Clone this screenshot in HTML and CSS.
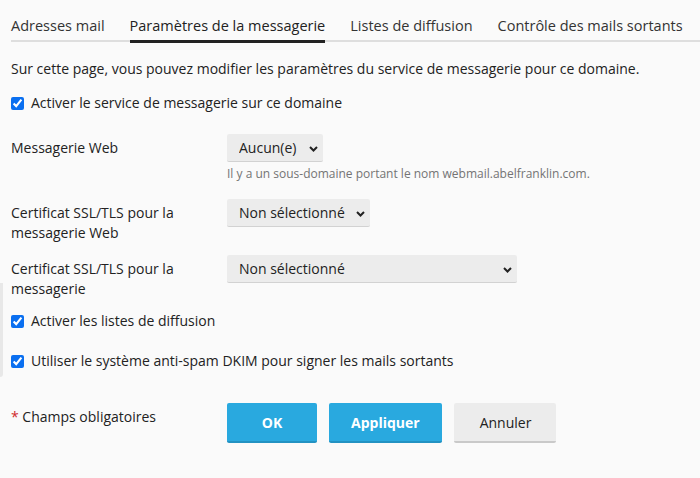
FILE: index.html
```html
<!DOCTYPE html>
<html lang="fr">
<head>
<meta charset="utf-8">
<title>Paramètres de la messagerie</title>
<link rel="stylesheet" href="styles.css">
</head>
<body>
<div class="side-mark"></div>
<div class="page">
  <nav class="tabs">
    <a class="tab">Adresses mail</a>
    <a class="tab active">Paramètres de la messagerie</a>
    <a class="tab">Listes de diffusion</a>
    <a class="tab">Contrôle des mails sortants</a>
  </nav>

  <p class="intro">Sur cette page, vous pouvez modifier les paramètres du service de messagerie pour ce domaine.</p>

  <label class="check first-check"><input type="checkbox" checked><span>Activer le service de messagerie sur ce domaine</span></label>

  <div class="row row-web">
    <div class="label">Messagerie Web</div>
    <div class="field">
      <span class="select-wrap w-small">
        <select class="select"><option>Aucun(e)</option></select>
        <svg class="chev" width="9" height="6" viewBox="0 0 9 6"><path d="M1 1 L4.5 4.5 L8 1" fill="none" stroke="#222" stroke-width="2"/></svg>
      </span>
      <div class="hint">Il y a un sous-domaine portant le nom webmail.abelfranklin.com.</div>
    </div>
  </div>

  <div class="row row-cert">
    <div class="label">Certificat SSL/TLS pour la messagerie Web</div>
    <div class="field">
      <span class="select-wrap w-mid">
        <select class="select"><option>Non sélectionné</option></select>
        <svg class="chev" width="9" height="6" viewBox="0 0 9 6"><path d="M1 1 L4.5 4.5 L8 1" fill="none" stroke="#222" stroke-width="2"/></svg>
      </span>
    </div>
  </div>

  <div class="row row-cert2">
    <div class="label">Certificat SSL/TLS pour la messagerie</div>
    <div class="field">
      <span class="select-wrap w-wide">
        <select class="select"><option>Non sélectionné</option></select>
        <svg class="chev" width="9" height="6" viewBox="0 0 9 6"><path d="M1 1 L4.5 4.5 L8 1" fill="none" stroke="#222" stroke-width="2"/></svg>
      </span>
    </div>
  </div>

  <label class="check lists-check"><input type="checkbox" checked><span>Activer les listes de diffusion</span></label>
  <label class="check dkim-check"><input type="checkbox" checked><span>Utiliser le système anti-spam DKIM pour signer les mails sortants</span></label>

  <div class="row footer">
    <div class="label req"><span class="star">*</span> Champs obligatoires</div>
    <div class="buttons">
      <button class="btn primary btn-ok">OK</button>
      <button class="btn primary">Appliquer</button>
      <button class="btn secondary">Annuler</button>
    </div>
  </div>
</div>
</body>
</html>
```

FILE: styles.css
```css
html, body {
  margin: 0;
  padding: 0;
  background: #fafafa;
}
body {
  font-family: "Open Sans", "Noto Sans", sans-serif;
  font-size: 14px;
  line-height: 20px;
  color: #222;
  position: relative;
  height: 478px;
  overflow: hidden;
}
.side-mark {
  position: absolute;
  left: 0;
  top: 283px;
  width: 3px;
  height: 94px;
  background: #e8e8e8;
  border-bottom-right-radius: 3px;
}
.page {
  padding-left: 11px;
}
.tabs {
  display: flex;
  gap: 25px;
  padding-top: 16px;
  border-bottom: 2px solid #dedede;
}
.tab {
  position: relative;
  color: #333;
  font-size: 14.5px;
  padding-bottom: 4px;
  white-space: nowrap;
}
.tab.active {
  color: #222;
}
.tab.active::after {
  content: "";
  position: absolute;
  left: 0;
  right: 0;
  bottom: -3px;
  height: 3px;
  background: #222;
}
.intro {
  margin: 17px 0 0;
  color: #222;
}
.check {
  display: flex;
  align-items: center;
}
.check input {
  width: 13px;
  height: 13px;
  margin: 0 7px 0 0;
  accent-color: #0a6ff0;
}
.first-check { margin-top: 14px; }
.lists-check { margin-top: 12px; }
.dkim-check { margin-top: 20px; }

.row {
  display: grid;
  grid-template-columns: 216px 1fr;
  align-items: start;
}
.label {
  padding-top: 4px;
  padding-right: 30px;
}
.row-web { margin-top: 21px; }
.row-cert { margin-top: 17px; }
.row-cert2 { margin-top: 12px; }

.select-wrap {
  position: relative;
  display: inline-block;
  height: 28px;
  vertical-align: top;
}
.select {
  appearance: none;
  -webkit-appearance: none;
  height: 28px;
  width: 100%;
  margin: 0;
  padding: 0 24px 0 12px;
  border: 0;
  border-bottom: 1px solid #d2d2d2;
  border-radius: 2px;
  background: #ececec;
  font-family: "Open Sans", "Noto Sans", sans-serif;
  font-size: 14px;
  color: #222;
}
.w-small { width: 96px; }
.w-mid { width: 143px; }
.w-wide { width: 290px; }
.chev {
  position: absolute;
  right: 5px;
  top: 12px;
  pointer-events: none;
}
.hint {
  margin-top: 4px;
  font-size: 12px;
  line-height: 16px;
  color: #747474;
}

.footer {
  margin-top: 32px;
}
.req {
  padding-top: 4px;
}
.star {
  color: #d02b2b;
}
.buttons {
  display: flex;
  gap: 12px;
}
.btn {
  height: 40px;
  padding: 0 22px;
  border: 0;
  border-radius: 2px;
  font-family: "Open Sans", "Noto Sans", sans-serif;
  font-size: 14px;
}
.btn-ok {
  min-width: 90px;
}
.primary {
  background: #29a9df;
  border-bottom: 2px solid #2392c2;
  color: #fff;
  font-weight: 700;
}
.secondary {
  background: #ececec;
  border-bottom: 2px solid #c9c9c9;
  color: #222;
  padding: 0 25px 0 26px;
}
```
